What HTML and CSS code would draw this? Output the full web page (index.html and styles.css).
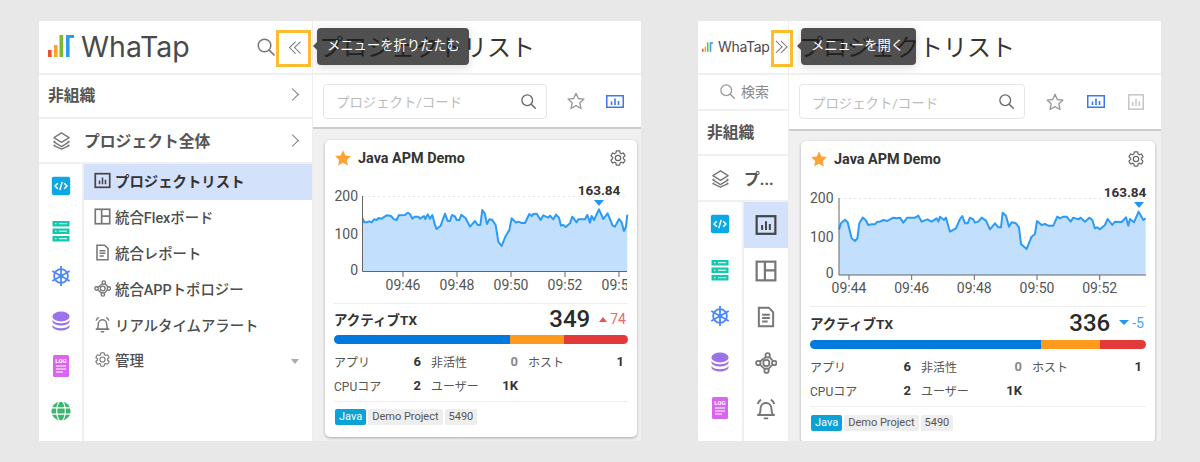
FILE: index.html
```html
<!DOCTYPE html>
<html lang="ja">
<head>
<meta charset="utf-8">
<title>WhaTap</title>
<link rel="stylesheet" href="styles.css">
</head>
<body>
<svg class="sprite" aria-hidden="true">
  <symbol id="i-logo" viewBox="0 0 28 24"><rect x="0" y="15" width="3.6" height="7" fill="#f0502d"/><rect x="6" y="10" width="3.6" height="12" fill="#fba524"/><rect x="11.5" y="0" width="3.6" height="22" fill="#7cb82f"/><path d="M18 22V0h8v3h-4.400v19z" fill="#2b9cf0"/></symbol>
  <symbol id="i-search" viewBox="0 0 20 20"><circle cx="8.500" cy="8.500" r="6.300" fill="none" stroke="currentColor" stroke-width="1.500"/><path d="M13.200 13.200 18 18" stroke="currentColor" stroke-width="1.700" stroke-linecap="round"/></symbol>
  <symbol id="i-layers" viewBox="0 0 20 20"><g fill="none" stroke="currentColor" stroke-width="1.400" stroke-linejoin="round"><path d="M10 2 18 7 10 12 2 7z"/><path d="M3.500 10.500 2 11.500 10 16.500 18 11.500 16.500 10.500"/><path d="M3.500 14.500 2 15.500 10 19 18 15.500 16.500 14.500"/></g></symbol>
  <symbol id="i-chart" viewBox="0 0 20 20"><rect x="1.500" y="2" width="17" height="16" fill="none" stroke="currentColor" stroke-width="2"/><path d="M6.500 10v4.500M10 6.500v8M13.500 9v5.500" stroke="currentColor" stroke-width="1.800"/></symbol>
  <symbol id="i-flex" viewBox="0 0 20 20"><g fill="none" stroke="currentColor" stroke-width="2"><rect x="1.500" y="1.500" width="17" height="17"/><path d="M9 1.500v17M9 9.500h9.500"/></g></symbol>
  <symbol id="i-doc" viewBox="0 0 20 20"><g fill="none" stroke="currentColor" stroke-width="1.800"><path d="M3.500 1.500h9l4 4v13h-13z"/><path d="M6.500 8h7M6.500 11h7M6.500 14h5"/></g></symbol>
  <symbol id="i-topo" viewBox="0 0 20 20"><g fill="none" stroke="currentColor" stroke-width="1.600"><circle cx="11.500" cy="3" r="2"/><circle cx="3" cy="10" r="2"/><circle cx="17.500" cy="10" r="2"/><circle cx="10.500" cy="17" r="2"/><path d="M10 4.500 4.500 8.700M13 4.500 16.500 8.300M16 11.300 12 15.700M4.500 11.500 9 15.500"/><circle cx="10.300" cy="10" r="2.800"/></g></symbol>
  <symbol id="i-bell" viewBox="0 0 20 20"><g fill="none" stroke="currentColor" stroke-width="1.700"><path d="M3.500 15.500c1.500-1.500 1.500-3 1.500-5.500 0-3 2-5.500 5-5.500s5 2.500 5 5.500c0 2.500 0 4 1.500 5.500z" stroke-linejoin="round"/><path d="M2 15.500h16M8 18.500h4M2.500 5.500C3 3.500 4 2.500 5.500 1.500M17.500 5.500C17 3.500 16 2.500 14.500 1.500"/></g></symbol>
  <symbol id="i-gear" viewBox="0 0 24 24"><path fill="none" stroke="currentColor" stroke-width="1.600" d="M19.140 12.940c.04-.3.06-.61.06-.94 0-.32-.02-.64-.07-.94l2.030-1.580c.18-.14.23-.41.12-.61l-1.920-3.320c-.12-.22-.37-.29-.59-.22l-2.390.96c-.5-.38-1.030-.7-1.620-.94l-.36-2.540c-.04-.24-.24-.41-.48-.41h-3.840c-.24 0-.43.17-.47.41l-.36 2.540c-.59.24-1.130.57-1.620.94l-2.390-.96c-.22-.08-.47 0-.59.22L2.740 8.870c-.12.21-.08.47.12.61l2.030 1.580c-.05.3-.09.63-.09.94s.02.64.07.94l-2.030 1.580c-.18.14-.23.41-.12.61l1.920 3.320c.12.22.37.29.59.22l2.390-.96c.5.38 1.030.7 1.620.94l.36 2.540c.05.24.24.41.48.41h3.840c.24 0 .44-.17.47-.41l.36-2.540c.59-.24 1.130-.56 1.620-.94l2.390.96c.22.08.47 0 .59-.22l1.920-3.320c.12-.22.07-.47-.12-.61l-2.010-1.580zM12 15.600c-1.980 0-3.600-1.620-3.600-3.600s1.620-3.600 3.600-3.600 3.600 1.620 3.600 3.600-1.620 3.600-3.600 3.600z"/></symbol>
  <symbol id="i-star" viewBox="0 0 20 20"><path d="M10 1.500 12.600 7.200 18.800 7.900 14.200 12.100 15.500 18.300 10 15.200 4.500 18.300 5.800 12.100 1.200 7.900 7.400 7.200z" stroke-linejoin="round"/></symbol>
  <symbol id="i-app" viewBox="-2 -2 24 24"><rect width="20" height="20" rx="2" fill="#0ba8e3"/><path d="M6.500 7 3.500 10l3 3M13.500 7l3 3-3 3M11.300 5.500 8.700 14.500" fill="none" stroke="#fff" stroke-width="1.700"/></symbol>
  <symbol id="i-server" viewBox="-1 -1 22 22"><g fill="#14c8ae"><rect x="1.500" y="0" width="17" height="5.500"/><rect x="1.500" y="7.500" width="17" height="5.500"/><rect x="1.500" y="15" width="17" height="5.500"/></g><path d="M4 2.700h1.500M8 2.700h8M4 10.200h1.500M8 10.200h8M4 17.700h1.500M8 17.700h8" stroke="#fff" stroke-width="1"/></symbol>
  <symbol id="i-kube" viewBox="-1 -1 24 24"><g fill="none" stroke="#4c88f8" stroke-width="2"><circle cx="11" cy="11" r="7.500"/><path d="M11 0v22M1.500 5.500 20.500 16.500M20.500 5.500 1.500 16.500"/></g><circle cx="11" cy="11" r="2.500" fill="#4c88f8"/></symbol>
  <symbol id="i-db" viewBox="-1 -1 22 22"><g fill="#9a73e8"><ellipse cx="10" cy="5.500" rx="8.500" ry="5"/><path d="M1.500 9c1.500 2.200 4.500 3.300 8.500 3.300S17 11.200 18.500 9v2c-1 2.300-4.500 3.500-8.500 3.500S2.500 13.300 1.500 11z"/><path d="M1.500 14c1.500 2.200 4.500 3.300 8.500 3.300s7-1.100 8.500-3.300v2c-1 2.300-4.500 3.500-8.500 3.500S2.500 18.300 1.500 16z"/></g></symbol>
  <symbol id="i-globe" viewBox="-1 -1 24 24"><circle cx="11" cy="11" r="10.500" fill="#3cb56f"/><g fill="none" stroke="#fff" stroke-width="1.300"><path d="M0 7.500h22M0 14.500h22"/><ellipse cx="11" cy="11" rx="4.700" ry="11"/></g></symbol>
  <symbol id="i-gchart" viewBox="0 0 20 20"><rect x="1" y="1" width="18" height="18" fill="none" stroke="currentColor" stroke-width="1.600"/><path d="M6 10v5M10 6v9M14 9v6" stroke="currentColor" stroke-width="1.600"/></symbol>
  <symbol id="i-wchart" viewBox="0 0 18 13"><rect x=".75" y=".75" width="16.500" height="11.500" fill="none" stroke="currentColor" stroke-width="1.500"/><path d="M5.500 6.500v3.500M9 3.500v6.500M12.500 6v4" stroke="currentColor" stroke-width="1.600"/></symbol>
</svg>

<section class="window">
  <aside class="side side-wide">
    <header class="side-head">
      <svg class="logo-mark"><use href="#i-logo"/></svg>
      <span class="logo-text">WhaTap</span>
      <svg class="head-search"><use href="#i-search"/></svg>
      <span class="chev chev-l"></span>
    </header>
    <div class="group-row group-row-first"><span class="row-title">非組織</span><span class="arrow"></span></div>
    <div class="group-row group-row-second"><svg class="layer-ic"><use href="#i-layers"/></svg><span class="row-title">プロジェクト全体</span><span class="arrow"></span></div>
    <div class="nav">
      <div class="prod-col">
        <svg class="prod-ic"><use href="#i-app"/></svg>
        <svg class="prod-ic"><use href="#i-server"/></svg>
        <svg class="prod-ic"><use href="#i-kube"/></svg>
        <svg class="prod-ic"><use href="#i-db"/></svg>
        <svg class="prod-ic" viewBox="0 0 22 22"><rect x="3" width="16" height="22" rx="1.500" fill="#d966ef"/><text x="11" y="8" text-anchor="middle" class="log-text">LOG</text><path d="M6 11h10M6 14h10M6 17h7" stroke="#fff" stroke-width="1"/></svg>
        <svg class="prod-ic"><use href="#i-globe"/></svg>
      </div>
      <ul class="menu">
        <li class="menu-item is-active"><svg class="menu-ic"><use href="#i-chart"/></svg>プロジェクトリスト</li>
        <li class="menu-item"><svg class="menu-ic"><use href="#i-flex"/></svg>統合Flexボード</li>
        <li class="menu-item"><svg class="menu-ic"><use href="#i-doc"/></svg>統合レポート</li>
        <li class="menu-item"><svg class="menu-ic"><use href="#i-topo"/></svg>統合APPトポロジー</li>
        <li class="menu-item"><svg class="menu-ic"><use href="#i-bell"/></svg>リアルタイムアラート</li>
        <li class="menu-item"><svg class="menu-ic"><use href="#i-gear"/></svg>管理<span class="caret"></span></li>
      </ul>
    </div>
  </aside>
  <main class="main">
    <h1 class="page-title">プロジェクトリスト</h1>
    <div class="toolbar">
      <div class="searchbox"><span>プロジェクト/コード</span><svg class="box-search"><use href="#i-search"/></svg></div>
      <svg class="tool-star"><use href="#i-star"/></svg>
      <svg class="tool-chart"><use href="#i-wchart"/></svg>
    </div>
    <div class="cards">
      <article class="card">
        <div class="card-head"><svg class="card-star"><use href="#i-star"/></svg><span class="card-name">Java APM Demo</span><svg class="card-gear"><use href="#i-gear"/></svg></div>
        <svg class="chart chart-a" viewBox="0 0 312 127">
          <defs><clipPath id="clip-a"><rect x="0" y="0" width="302" height="127"/></clipPath></defs>
          <path class="grid-line" d="M38 20.500H302M38 58.500H302"/>
          <g transform="translate(-5 -6) scale(.3333)">
            <path class="area" d="M128,145L133,157L140,157L148,154L155,157L162,148L170,150L176,144L185,146L200,136L213,138L222,148L230,150L236,136L255,135L263,128L270,132L277,146L285,140L295,140L300,146L312,138L316,147L323,133L330,146L337,135L345,165L350,177L362,167L375,131L383,153L390,153L396,135L405,139L410,150L418,150L424,134L437,145L450,170L465,153L473,165L481,165L487,120L494,130L501,162L508,148L516,149L527,165L535,215L545,228L556,200L568,180L575,145L588,158L595,155L605,159L615,159L628,132L635,138L640,132L650,131L662,150L670,136L685,143L690,137L700,148L708,134L717,143L723,167L730,165L737,171L750,160L757,140L770,157L775,148L795,148L802,135L810,158L815,138L822,150L837,118L850,147L863,130L878,167L885,170L897,147L905,157L912,183L918,170L922,134L922,305L128,305Z"/>
            <path class="line" d="M128,145L133,157L140,157L148,154L155,157L162,148L170,150L176,144L185,146L200,136L213,138L222,148L230,150L236,136L255,135L263,128L270,132L277,146L285,140L295,140L300,146L312,138L316,147L323,133L330,146L337,135L345,165L350,177L362,167L375,131L383,153L390,153L396,135L405,139L410,150L418,150L424,134L437,145L450,170L465,153L473,165L481,165L487,120L494,130L501,162L508,148L516,149L527,165L535,215L545,228L556,200L568,180L575,145L588,158L595,155L605,159L615,159L628,132L635,138L640,132L650,131L662,150L670,136L685,143L690,137L700,148L708,134L717,143L723,167L730,165L737,171L750,160L757,140L770,157L775,148L795,148L802,135L810,158L815,138L822,150L837,118L850,147L863,130L878,167L885,170L897,147L905,157L912,183L918,170L922,134"/>
          </g>
          <path class="axis" d="M37.500 20V95.500H302M78 96v5M132 96v5M186 96v5M240 96v5M294 96v5"/>
          <g class="ylab"><text x="33" y="25">200</text><text x="33" y="63">100</text><text x="33" y="99">0</text></g>
          <g class="xlab" clip-path="url(#clip-a)"><text x="78" y="114">09:46</text><text x="132" y="114">09:48</text><text x="186" y="114">09:50</text><text x="240" y="114">09:52</text><text x="294" y="114">09:54</text></g>
          <text class="peak" x="274" y="19">163.84</text>
          <path class="peak-mark" d="M269 24H279L274 30Z"/>
        </svg>
        <div class="active-row"><span class="active-label">アクティブTX</span><span class="active-num">349</span><span class="delta delta-up"><i class="tri-up"></i>74</span></div>
        <div class="bar"><span class="seg seg-blue seg-a1"></span><span class="seg seg-orange seg-a2"></span><span class="seg seg-red seg-a3"></span></div>
        <div class="stats stats-a">
          <div class="stat"><span>アプリ</span><b>6</b></div><div class="stat"><span>非活性</span><b class="zero">0</b></div><div class="stat stat-last"><span>ホスト</span><b>1</b></div>
          <div class="stat"><span>CPUコア</span><b>2</b></div><div class="stat"><span>ユーザー</span><b>1K</b></div>
        </div>
        <div class="tags"><span class="tag tag-java">Java</span><span class="tag">Demo Project</span><span class="tag">5490</span></div>
      </article>
    </div>
  </main>
  <span class="hl hl-a"></span>
  <div class="tip tip-a">メニューを折りたたむ</div>
</section>

<section class="window window-b">
  <aside class="side side-narrow">
    <header class="side-head side-head-b">
      <svg class="logo-mark logo-mark-b"><use href="#i-logo"/></svg>
      <span class="logo-text logo-text-b">WhaTap</span>
      <span class="chev chev-r"></span>
    </header>
    <div class="search-row"><svg class="head-search"><use href="#i-search"/></svg>検索</div>
    <div class="group-row group-row-b"><span class="row-title">非組織</span></div>
    <div class="group-row group-row-b group-row-c"><svg class="layer-ic"><use href="#i-layers"/></svg><span class="row-title">プ...</span></div>
    <div class="nav">
      <div class="prod-col prod-col-b">
        <svg class="prod-ic"><use href="#i-app"/></svg>
        <svg class="prod-ic"><use href="#i-server"/></svg>
        <svg class="prod-ic"><use href="#i-kube"/></svg>
        <svg class="prod-ic"><use href="#i-db"/></svg>
        <svg class="prod-ic" viewBox="0 0 22 22"><rect x="3" width="16" height="22" rx="1.500" fill="#d966ef"/><text x="11" y="8" text-anchor="middle" class="log-text">LOG</text><path d="M6 11h10M6 14h10M6 17h7" stroke="#fff" stroke-width="1"/></svg>
      </div>
      <div class="mini-menu">
        <span class="mini is-active"><svg><use href="#i-chart"/></svg></span>
        <span class="mini"><svg><use href="#i-flex"/></svg></span>
        <span class="mini"><svg><use href="#i-doc"/></svg></span>
        <span class="mini"><svg><use href="#i-topo"/></svg></span>
        <span class="mini"><svg><use href="#i-bell"/></svg></span>
      </div>
    </div>
  </aside>
  <main class="main">
    <h1 class="page-title page-title-b">プロジェクトリスト</h1>
    <div class="toolbar toolbar-b">
      <div class="searchbox searchbox-b"><span>プロジェクト/コード</span><svg class="box-search"><use href="#i-search"/></svg></div>
      <svg class="tool-star tool-star-b"><use href="#i-star"/></svg>
      <svg class="tool-chart tool-chart-b"><use href="#i-wchart"/></svg>
      <svg class="tool-gray"><use href="#i-gchart"/></svg>
    </div>
    <div class="cards cards-b">
      <article class="card card-b">
        <div class="card-head"><svg class="card-star"><use href="#i-star"/></svg><span class="card-name">Java APM Demo</span><svg class="card-gear"><use href="#i-gear"/></svg></div>
        <svg class="chart chart-b" viewBox="0 0 354 129">
          <path class="grid-line" d="M38 21.500H345M38 60.500H345"/>
          <g transform="translate(-1 -7) scale(.3333)">
            <path class="area" d="M117,178L123,160L135,149L143,157L150,185L155,205L165,213L172,205L178,160L188,143L197,150L205,165L215,163L225,163L232,155L240,155L250,150L262,153L280,143L290,145L300,143L310,158L322,143L345,143L355,137L365,155L382,148L395,155L410,145L415,155L420,140L432,150L438,143L450,185L468,175L480,147L487,138L495,160L503,160L510,143L520,148L525,158L535,155L545,143L558,152L570,178L585,160L595,172L603,172L608,128L618,137L627,170L635,157L648,160L657,172L663,222L680,237L695,200L705,192L711,153L725,165L735,162L745,167L760,167L772,140L780,145L790,140L800,140L812,155L820,143L835,148L842,143L855,155L868,143L877,150L885,175L892,172L900,178L915,165L923,147L937,165L945,155L965,156L978,142L985,167L990,147L1002,157L1016,125L1030,150L1037,145L1037,315L117,315Z"/>
            <path class="line" d="M117,178L123,160L135,149L143,157L150,185L155,205L165,213L172,205L178,160L188,143L197,150L205,165L215,163L225,163L232,155L240,155L250,150L262,153L280,143L290,145L300,143L310,158L322,143L345,143L355,137L365,155L382,148L395,155L410,145L415,155L420,140L432,150L438,143L450,185L468,175L480,147L487,138L495,160L503,160L510,143L520,148L525,158L535,155L545,143L558,152L570,178L585,160L595,172L603,172L608,128L618,137L627,170L635,157L648,160L657,172L663,222L680,237L695,200L705,192L711,153L725,165L735,162L745,167L760,167L772,140L780,145L790,140L800,140L812,155L820,143L835,148L842,143L855,155L868,143L877,150L885,175L892,172L900,178L915,165L923,147L937,165L945,155L965,156L978,142L985,167L990,147L1002,157L1016,125L1030,150L1037,145"/>
          </g>
          <path class="axis" d="M38 21V98H345M48 98v5M110.700 98v5M173.300 98v5M236 98v5M298.700 98v5"/>
          <g class="ylab"><text x="32.500" y="26">200</text><text x="32.500" y="65">100</text><text x="32.500" y="101">0</text></g>
          <g class="xlab"><text x="48" y="116">09:44</text><text x="110.700" y="116">09:46</text><text x="173.300" y="116">09:48</text><text x="236" y="116">09:50</text><text x="298.700" y="116">09:52</text></g>
          <text class="peak" x="324" y="20">163.84</text>
          <path class="peak-mark" d="M333 25H343L338 31Z"/>
        </svg>
        <div class="active-row"><span class="active-label">アクティブTX</span><span class="active-num">336</span><span class="delta delta-down"><i class="tri-down"></i>-5</span></div>
        <div class="bar"><span class="seg seg-blue seg-b1"></span><span class="seg seg-orange seg-b2"></span><span class="seg seg-red seg-b3"></span></div>
        <div class="stats stats-b">
          <div class="stat"><span>アプリ</span><b>6</b></div><div class="stat"><span>非活性</span><b class="zero">0</b></div><div class="stat stat-last"><span>ホスト</span><b>1</b></div>
          <div class="stat"><span>CPUコア</span><b>2</b></div><div class="stat"><span>ユーザー</span><b>1K</b></div>
        </div>
        <div class="tags"><span class="tag tag-java">Java</span><span class="tag">Demo Project</span><span class="tag">5490</span></div>
      </article>
    </div>
  </main>
  <span class="hl hl-b"></span>
  <div class="tip tip-b">メニューを開く</div>
</section>
</body>
</html>
```
FILE: styles.css
```css
* { box-sizing: border-box; }
html, body { margin: 0; height: 100%; }
body {
  display: flex;
  gap: 57px;
  height: 462px;
  padding: 21px 0 21px 39px;
  background: #e8e8e8;
  font-family: Roboto, "Noto Sans CJK JP", sans-serif;
  color: #333;
  overflow: hidden;
}
.sprite { position: absolute; width: 0; height: 0; }
.log-text { font: 700 6px Roboto, sans-serif; fill: #fff; }

.window { position: relative; display: flex; width: 602px; height: 420px; background: #fff; overflow: hidden; }
.window-b { width: 463px; }

.side { flex: none; display: flex; flex-direction: column; border-right: 1px solid #eee; background: #fff; }
.side-wide { width: 274px; }
.side-narrow { width: 91px; }

.side-head { display: flex; align-items: center; height: 54px; flex: none; padding-left: 9px; border-bottom: 2px solid #f0f0f0; }
.side-head-b { padding-left: 4px; }
.logo-mark { width: 28px; height: 24px; flex: none; margin-right: 7px; }
.logo-mark-b { width: 12px; height: 11px; margin-right: 4px; }
.logo-text { font: 400 28.500px/1 Inter, sans-serif; color: #4a4a4a; width: 108px; flex: none; margin-left: -2px; }
.logo-text-b { font-size: 14px; letter-spacing: -.3px; width: 53px; margin-left: 0; }
.head-search { width: 20px; height: 20px; color: #777; flex: none; margin-left: 67px; }
.chev { position: relative; width: 10px; height: 10px; flex: none; margin-left: 15px; }
.chev::before, .chev::after { content: ""; position: absolute; top: 1px; width: 7.500px; height: 7.500px; border-left: 1.300px solid #777; border-bottom: 1.300px solid #777; transform: rotate(45deg); }
.chev-l::before { left: 0; }
.chev-l::after { left: 5px; }
.chev-r { margin-left: 2px; }
.chev-r::before, .chev-r::after { transform: rotate(225deg); }
.chev-r::before { left: -1px; }
.chev-r::after { left: 4px; }

.group-row { display: flex; align-items: center; height: 45px; flex: none; padding: 0 12px 3px 9px; border-bottom: 2px solid #f0f0f0; }
.group-row-first { height: 44px; }
.group-row-second { padding-bottom: 1px; }
.row-title { font-size: 15.800px; font-weight: 700; color: #555; flex: 1; white-space: nowrap; }
.arrow { width: 9px; height: 9px; border-top: 1.500px solid #777; border-right: 1.500px solid #777; transform: rotate(45deg); margin-right: 3px; }
.layer-ic { width: 19px; height: 19px; color: #777; margin: 0 13px 0 4px; flex: none; }

.search-row { display: flex; align-items: center; gap: 5px; height: 36px; flex: none; padding: 0 0 2px 21px; border-bottom: 2px solid #f0f0f0; font-size: 14px; color: #888; }
.search-row .head-search { width: 17px; height: 17px; margin-left: 0; color: #999; }
.group-row-b { height: 45px; padding-left: 9px; }
.group-row-c { height: 46px; padding-left: 10px; padding-bottom: 0; }
.group-row-c .layer-ic { margin: 0 14px 0 3px; }

.nav { display: flex; flex: 1; min-height: 0; }
.prod-col { width: 45px; flex: none; display: flex; flex-direction: column; align-items: center; gap: 23px; padding-top: 11px; border-right: 2px solid #f0f0f0; }
.prod-ic { width: 22px; height: 22px; flex: none; }
.prod-col-b { width: 46px; gap: 24px; padding-top: 11px; }

.menu { list-style: none; margin: 0; padding: 0; flex: 1; }
.menu-item { position: relative; display: flex; align-items: center; gap: 4px; height: 35.800px; padding: 0 0 2px 10px; font-size: 14.400px; font-weight: 500; color: #4d4d4d; white-space: nowrap; }
.menu-item.is-active { background: #d4e1fb; font-weight: 700; color: #333; }
.menu-ic { width: 17px; height: 17px; flex: none; color: #777; }
.is-active .menu-ic { color: #444; }
.caret { position: absolute; right: 13px; top: 16px; border: 4px solid transparent; border-top: 5px solid #aaa; border-bottom: 0; }

.mini-menu { flex: 1; display: flex; flex-direction: column; }
.mini { display: flex; align-items: center; justify-content: center; height: 46px; color: #777; }
.mini svg { width: 22px; height: 22px; }
.mini.is-active { background: #d4e1fb; color: #444; }

.main { flex: 1; min-width: 0; display: flex; flex-direction: column; background: #f0f0f0; }
.page-title { flex: none; height: 54px; margin: 0; padding: 0 0 0 6px; background: #fff; border-bottom: 2px solid #f0f0f0; font-size: 24px; font-weight: 400; line-height: 54px; color: #333; white-space: nowrap; }
.page-title-b { padding-left: 10px; }
.toolbar { flex: none; display: flex; align-items: center; height: 54px; padding: 0 0 0 10px; background: #fff; border-bottom: 2px solid #ccc; }
.toolbar-b { height: 56px; padding-bottom: 1px; }
.searchbox { display: flex; align-items: center; justify-content: space-between; width: 224px; height: 35px; padding: 0 9px 0 12px; border: 1px solid #e6e6e6; border-radius: 4px; font-size: 13.400px; color: #bbb; }
.searchbox-b { width: 226px; }
.box-search { width: 17px; height: 17px; color: #666; }
.tool-star { width: 18px; height: 18px; margin-left: 20px; fill: #fff; stroke: #999; stroke-width: 1.500; }
.tool-star-b { margin-left: 21px; }
.tool-chart { width: 18px; height: 13px; margin-left: 21px; color: #3b78f0; }
.tool-chart-b { margin-left: 23px; }
.tool-gray { width: 16px; height: 16px; margin-left: 23px; color: #bbb; }

.cards { flex: 1; padding: 11px 4px 0 12px; min-height: 0; }
.cards-b { padding: 10px 6px 0 12px; }
.card { background: #fff; border-radius: 5px; box-shadow: 0 1px 3px rgba(0,0,0,.3); padding: 0 0 12px; }
.card-head { display: flex; align-items: center; height: 36px; padding: 0 10px 0 9px; }
.card-star { width: 18px; height: 18px; fill: #ffa234; margin-right: 6px; flex: none; }
.card-name { flex: 1; font-size: 14.400px; font-weight: 700; color: #333; }
.card-gear { width: 18px; height: 18px; color: #666; }

.chart { display: block; width: 312px; height: 127px; }
.chart-b { width: 354px; height: 129px; }
.area { fill: #c2dffd; }
.line { fill: none; stroke: #2b9bf8; stroke-width: 6; stroke-linejoin: round; }
.grid-line { fill: none; stroke: #e1e6ec; stroke-dasharray: 2 3; }
.axis { fill: none; stroke: #666; stroke-width: 1; }
.ylab text { font-size: 14px; fill: #555; text-anchor: end; }
.xlab text { font-size: 14px; fill: #555; text-anchor: middle; }
.peak { font-size: 13.500px; font-weight: 700; fill: #333; text-anchor: middle; }
.peak-mark { fill: #2196f3; }

.active-row { display: flex; align-items: center; height: 32px; margin: 0 9px; padding: 0 2px 1px 0; border-top: 1px solid #eee; }
.card-b .active-row { height: 34px; padding-bottom: 2px; }
.active-label { flex: 1; font-size: 13.500px; font-weight: 700; color: #333; }
.active-num { font-size: 24px; font-weight: 500; color: #2a2a2a; margin-right: 9px; }
.delta { display: flex; align-items: center; gap: 2px; font-size: 14px; }
.delta-up { color: #ef6767; }
.delta-down { color: #42a5f5; }
.tri-up { border: 4px solid transparent; border-bottom: 5px solid #ef5350; border-top: 0; margin-right: 1px; }
.tri-down { border: 5px solid transparent; border-top: 5px solid #2196f3; border-bottom: 0; margin-right: 1px; }

.bar { display: flex; height: 9px; margin: 0 9px; border-radius: 5px; overflow: hidden; }
.seg { display: block; }
.seg-blue { background: #0279dd; }
.seg-orange { background: #ff9a1c; }
.seg-red { background: #e23a3a; flex: 1; }
.seg-a1 { width: 176px; }
.seg-a2 { width: 54px; }
.seg-b1 { width: 231px; }
.seg-b2 { width: 59px; }

.stats { display: grid; grid-auto-rows: 24px; column-gap: 10px; margin: 5px 9px 0; padding-bottom: 4px; border-bottom: 1px solid #eee; font-size: 12px; }
.stats-a { grid-template-columns: 87px 87px 1fr; }
.stats-b { grid-template-columns: 101px 101px 1fr; }
.stat { display: flex; align-items: center; justify-content: space-between; color: #555; }
.stat b { color: #333; font-size: 13px; }
.stat b.zero { color: #888; }
.stat-last { padding-right: 4px; }

.tags { display: flex; gap: 2px; margin: 7px 9px 0 10px; }
.card-b .tags { margin-top: 8px; }
.tag { display: block; height: 16px; padding: 0 4px; border-radius: 2px; background: #eee; font-size: 11px; line-height: 16px; color: #555; }
.tag-java { background: #0ba3d6; color: #fff; }

.hl { position: absolute; top: 9px; height: 37px; border: 3px solid #fbbc2d; }
.hl-a { left: 237px; width: 35px; }
.hl-b { left: 73px; width: 22px; }
.tip { position: absolute; top: 7px; height: 37px; padding: 0 9px 0 10px; border-radius: 4px; background: rgba(30,30,30,.775); color: #fff; font-size: 13.300px; line-height: 35px; white-space: nowrap; box-shadow: 0 2px 10px rgba(0,0,0,.15); }
.tip::before { content: ""; position: absolute; left: -4px; top: 14px; border: 4px solid transparent; border-right-color: #505050; border-left: 0; }
.tip-a { left: 278px; width: 152px; }
.tip-b { left: 103px; width: 115px; }
```
